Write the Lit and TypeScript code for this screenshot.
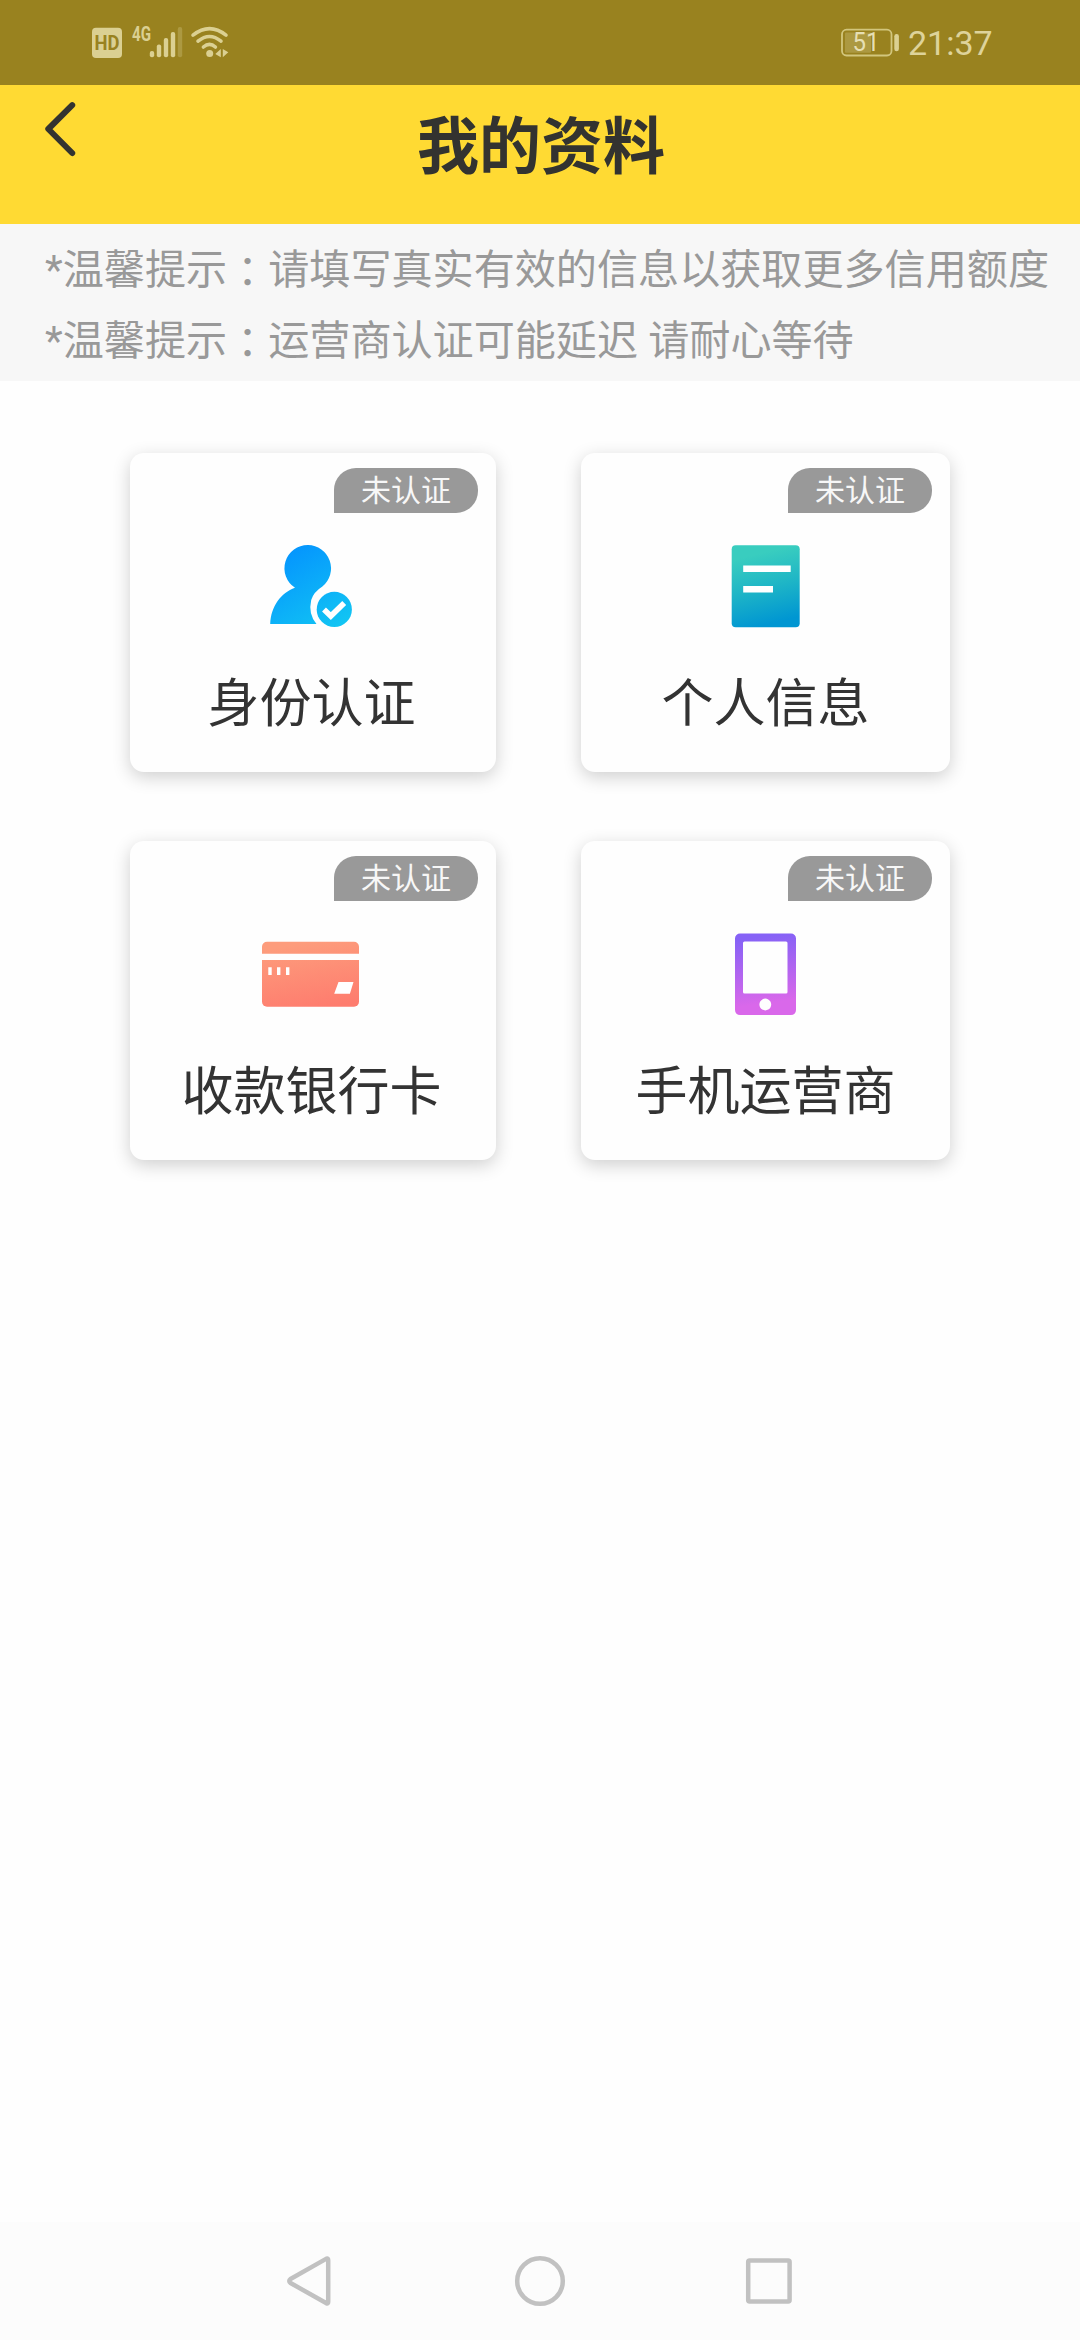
import { LitElement, html, svg, css } from "lit";
import { customElement, property } from "lit/decorators.js";

const icons = {
  identity: svg`
    <defs><linearGradient id="g" gradientUnits="userSpaceOnUse" x1="20" y1="0" x2="75" y2="90">
      <stop offset="0" stop-color="#038fff"/><stop offset="1" stop-color="#12c6f3"/></linearGradient></defs>
    <path fill="url(#g)" d="M39 9a23.3 23.3 0 0 1 14.4 41.4 Q44.5 56 42.2 64 Q39 78 47.5 88 H1.2 C2 70 12 57 26 51.8 A23.3 23.3 0 0 1 39 9z"/>
    <circle cx="65.3" cy="73.4" r="17.6" fill="url(#g)"/>
    <path d="M55 73.5 L61.8 80 L75.2 67" fill="none" stroke="#fff" stroke-width="5.6"/>`,
  info: svg`
    <defs><linearGradient id="g" x1=".4" y1="0" x2=".6" y2="1">
      <stop offset=".1" stop-color="#39cdbf"/><stop offset=".5" stop-color="#1fb6c6"/><stop offset=".95" stop-color="#0096d2"/></linearGradient></defs>
    <rect x="7.7" y="9.3" width="68" height="82" rx="4" fill="url(#g)"/>
    <rect x="19.2" y="29.5" width="47.5" height="6.5" fill="#fff"/>
    <rect x="19.2" y="50" width="29.8" height="6.5" fill="#fff"/>`,
  card: svg`
    <defs><linearGradient id="g" gradientUnits="userSpaceOnUse" x1="40" y1="17" x2="52" y2="83">
      <stop offset="0" stop-color="#fd9c7c"/><stop offset="1" stop-color="#fe7c6e"/></linearGradient></defs>
    <g transform="translate(0 .9)">
      <path fill="url(#g)" d="M-7 28.8v-7a5 5 0 0 1 5-5h87a5 5 0 0 1 5 5v7z"/>
      <path fill="url(#g)" d="M-7 35.2h97v41.6a5 5 0 0 1-5 5h-87a5 5 0 0 1-5-5z"/>
      <path fill="#fff" d="M-.7 42.3h3.4v7.8h-3.4zM8 42.3h3.4v7.8h-3.4zM17 42.3h3.4v7.8h-3.4zM69.5 57.2h15l-3.6 11.6h-15.7z"/>
    </g>`,
  phone: svg`
    <defs><linearGradient id="g" x1="0" y1="0" x2=".1" y2="1">
      <stop offset=".08" stop-color="#8662f6"/><stop offset=".9" stop-color="#d968ea"/></linearGradient></defs>
    <path transform="translate(0 .8)" fill="url(#g)" fill-rule="evenodd" d="M16 8.7h51a5 5 0 0 1 5 5v71.6a5 5 0 0 1-5 5h-51a5 5 0 0 1-5-5v-71.6a5 5 0 0 1 5-5z
      M20.5 16.7a1.5 1.5 0 0 0-1.5 1.5v49a1.5 1.5 0 0 0 1.5 1.5h41.5a1.5 1.5 0 0 0 1.5-1.5v-49a1.5 1.5 0 0 0-1.5-1.5z
      M41.3 73.8a5.9 5.9 0 1 0 .01 0z"/>`,
};

type IconName = keyof typeof icons;

const items: { icon: IconName; label: string; status: string }[] = [
  { icon: "identity", label: "身份认证", status: "未认证" },
  { icon: "info", label: "个人信息", status: "未认证" },
  { icon: "card", label: "收款银行卡", status: "未认证" },
  { icon: "phone", label: "手机运营商", status: "未认证" },
];

@customElement("profile-card")
export class ProfileCard extends LitElement {
  @property() icon: IconName = "identity";
  @property() label = "";
  @property() status = "";

  static styles = css`
    :host {
      display: flex;
      flex-direction: column;
      align-items: center;
      box-sizing: border-box;
      height: 319px;
      padding-top: 15px;
      border-radius: 14px;
      background: #fefefe;
      box-shadow: 0 5px 18px rgba(0, 0, 0, 0.19);
    }
    .badge {
      align-self: flex-end;
      width: 144px;
      height: 45px;
      margin-right: 18px;
      border-radius: 22px 22px 22px 0;
      background: #999;
      color: #f7f7f7;
      font-size: 30px;
      line-height: 45px;
      text-align: center;
    }
    .icon {
      display: block;
      width: 84px;
      height: 100px;
      margin-top: 23px;
      overflow: visible;
    }
    :host(.left) .icon {
      margin-right: 5px;
    }
    .label {
      margin-top: 31px;
      color: #333;
      font-size: 52px;
      line-height: 76px;
      white-space: nowrap;
    }
    :host(.left) .label {
      margin-right: 3px;
    }
  `;

  render() {
    return html`
      <div class="badge">${this.status}</div>
      <svg class="icon" viewBox="0 0 84 100">${icons[this.icon]}</svg>
      <div class="label">${this.label}</div>
    `;
  }
}

@customElement("app-root")
export class AppRoot extends LitElement {
  static styles = css`
    :host {
      display: flex;
      flex-direction: column;
      width: 1080px;
      height: 2340px;
      overflow: hidden;
      background: #fefefe;
      font-family: Roboto, "Noto Sans CJK SC", sans-serif;
    }
    svg {
      display: block;
    }
    .status {
      display: flex;
      justify-content: space-between;
      height: 85px;
      padding: 0 88px 0 92px;
      background: #99821f;
      color: #ded39a;
    }
    .power {
      display: flex;
    }
    .clock {
      margin-left: 7px;
      font-size: 34px;
      line-height: 87px;
      width: 84px;
      white-space: nowrap;
    }
    .header {
      display: grid;
      grid-template-columns: 120px 1fr 120px;
      height: 139px;
      background: #ffda33;
    }
    .title {
      margin: 0;
      padding-left: 2px;
      color: #333330;
      font-size: 62px;
      font-weight: 700;
      line-height: 125px;
      text-align: center;
      white-space: nowrap;
    }
    .notice {
      display: grid;
      grid-auto-rows: 71px;
      align-content: start;
      height: 157px;
      box-sizing: border-box;
      padding: 11px 0 0 45px;
      background: #f7f7f7;
      color: #999;
      font-size: 41.1px;
      line-height: 71px;
      white-space: nowrap;
    }
    .notice p {
      margin: 0;
    }
    .colon {
      font-family: "Noto Sans CJK TC", sans-serif;
      line-height: 1;
      vertical-align: -3px;
    }
    .grid {
      display: grid;
      grid-template-columns: 366px 369px;
      column-gap: 85px;
      row-gap: 69px;
      padding: 72px 130px 0;
      flex: 1;
      align-content: start;
    }
    .nav {
      height: 118px;
      background: #fcfcfc;
    }
  `;

  render() {
    return html`
      <div class="status">
        <svg width="140" height="85" viewBox="92 0 140 85" fill="#dbd092">
          <rect x="92" y="27.7" width="30" height="30.3" rx="4"/>
          <text x="107" y="50.3" text-anchor="middle" font-size="19.5" font-weight="700" fill="#99821f" textLength="25" lengthAdjust="spacingAndGlyphs">HD</text>
          <text x="132" y="41" font-size="19.5" font-weight="700" textLength="19" lengthAdjust="spacingAndGlyphs">4G</text>
          <rect x="149.8" y="51" width="4.4" height="6.3" rx="2"/>
          <rect x="156.8" y="44.5" width="4.4" height="12.8" rx="2"/>
          <rect x="163.8" y="38" width="4.4" height="19.3" rx="2"/>
          <rect x="170.8" y="32" width="4.4" height="25.3" rx="2"/>
          <rect x="177.8" y="27" width="4.4" height="30.3" rx="2" opacity=".3"/>
          <g fill="none" stroke="#dbd092" stroke-width="3.6" stroke-linecap="round">
            <path d="M193 35.2Q209.5 22.2 226 35.2M198 41.2Q209.5 31.8 221 41.2M203.4 47Q209.5 41.6 215.4 47"/>
          </g>
          <circle cx="209.7" cy="53.6" r="3.5"/>
          <path d="M220.8 49v8.3l-5.5-3.4zM222.8 49v8.3l5.5-5z"/>
        </svg>
        <div class="power">
          <svg width="60" height="85" viewBox="841 0 60 85" fill="#dbd092">
            <rect x="842" y="29.7" width="49.5" height="25.8" rx="4.5" fill="none" stroke="#d2c67d" stroke-width="1.8"/>
            <rect x="845" y="32.5" width="26" height="20.3" rx="1" opacity=".3"/>
            <rect x="894.3" y="34" width="4.6" height="17.3" rx="2.2"/>
            <text x="852.5" y="51.3" font-size="26" fill="#e6dfb4" textLength="27" lengthAdjust="spacingAndGlyphs">51</text>
          </svg>
          <span class="clock">21:37</span>
        </div>
      </div>
      <header class="header">
        <svg width="120" height="139" viewBox="0 85 120 139">
          <path d="M72.2 105.2L48.3 129L72.2 153" fill="none" stroke="#333330" stroke-width="6" stroke-linecap="round" stroke-linejoin="round"/>
        </svg>
        <h1 class="title">我的资料</h1>
      </header>
      <div class="notice">
        <p>*温馨提示<span class="colon">：</span>请填写真实有效的信息以获取更多信用额度</p>
        <p>*温馨提示<span class="colon">：</span>运营商认证可能延迟 请耐心等待</p>
      </div>
      <main class="grid">
        ${items.map(
          (item, i) => html`<profile-card
            class=${i % 2 === 0 ? "left" : "right"}
            .icon=${item.icon}
            .label=${item.label}
            .status=${item.status}
          ></profile-card>`
        )}
      </main>
      <nav class="nav">
        <svg width="1080" height="118" viewBox="0 2222 1080 118" fill="none" stroke="#c1c1c1" stroke-width="4.5" stroke-linejoin="round">
          <path d="M326.5 2258.6Q328.2 2258 328.2 2260V2302Q328.2 2304 326.5 2303.3L290.5 2283Q288 2281 290.5 2279z"/>
          <circle cx="540" cy="2281" r="22.8"/>
          <rect x="748.2" y="2260.6" width="41.4" height="41" rx="1.5"/>
        </svg>
      </nav>
    `;
  }
}
